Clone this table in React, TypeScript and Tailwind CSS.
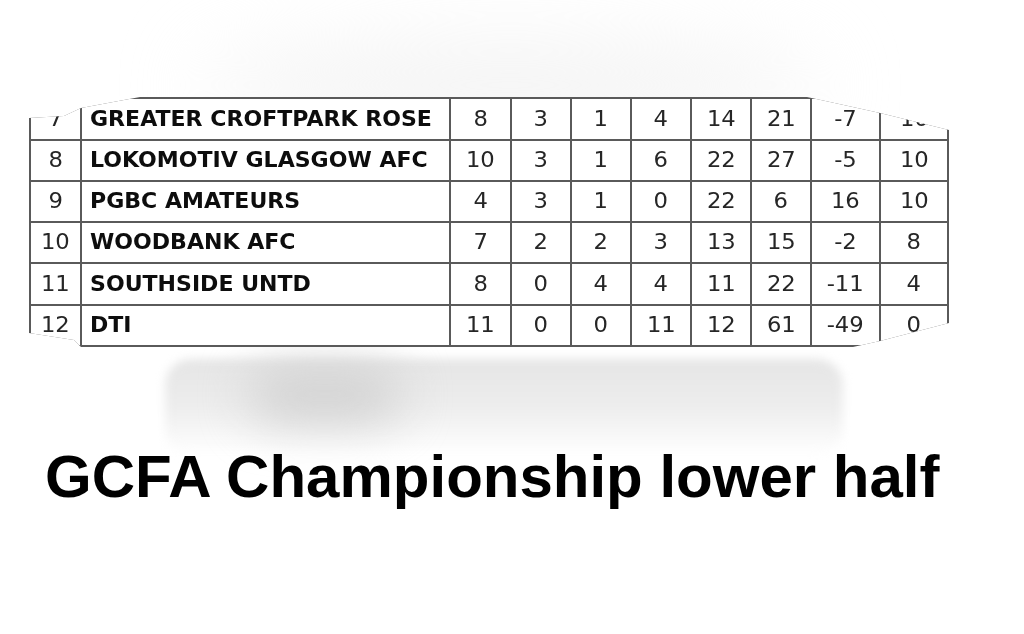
const rows: (string | number)[][] = [
  [7, 'GREATER CROFTPARK ROSE', 8, 3, 1, 4, 14, 21, -7, 10],
  [8, 'LOKOMOTIV GLASGOW AFC', 10, 3, 1, 6, 22, 27, -5, 10],
  [9, 'PGBC AMATEURS', 4, 3, 1, 0, 22, 6, 16, 10],
  [10, 'WOODBANK AFC', 7, 2, 2, 3, 13, 15, -2, 8],
  [11, 'SOUTHSIDE UNTD', 8, 0, 4, 4, 11, 22, -11, 4],
  [12, 'DTI', 11, 0, 0, 11, 12, 61, -49, 0],
];

function Cell({ value, name }: { value: string | number; name?: boolean }) {
  if (name) {
    return (
      <div className="bg-white flex items-center pl-[8px]">
        <span className="inline-block origin-left scale-x-[1.05] font-bold text-[#0d0d0d] whitespace-nowrap">
          {value}
        </span>
      </div>
    );
  }
  return (
    <div className="bg-white flex items-center justify-center">
      <span className="inline-block scale-x-[1.08] text-[#262626]">{value}</span>
    </div>
  );
}

export default function App() {
  return (
    <div className="relative w-[1024px] h-[634px] overflow-hidden bg-white">
      {/* faint glow above the lifted table */}
      <div className="absolute left-[200px] top-[45px] w-[620px] h-[80px] rounded-[50%] bg-[#f3f3f3] blur-2xl" />
      {/* shadow under the table */}
      <div className="absolute left-[165px] top-[359px] w-[678px] h-[96px] rounded-[26px] bg-gradient-to-b from-[#e5e5e5] via-[#ededed] to-[#ffffff] blur-[5px]" />
      <div className="absolute left-[250px] top-[366px] w-[150px] h-[56px] rounded-full bg-[#d2d2d2] blur-xl" />

      <div className="relative pt-[97px] pl-[29px]">
        <div className="grid w-fit grid-cols-[49px_367px_59px_58px_58px_58px_58px_58px_67px_66px] grid-rows-[40px_39px_39px_39px_40px_39px] gap-[2px] p-[2px] bg-[#5a5a5a] text-[21px] leading-none [font-family:'DejaVu_Sans',sans-serif] [clip-path:polygon(0_21px,35px_19px,52px_11px,111px_0,778px_0,801px_5px,851px_16px,920px_33px,920px_226px,851px_244px,824px_250px,52px_250px,45px_243px,0_236px)]">
          {rows.map((r) =>
            r.map((v, i) => <Cell key={`${r[0]}-${i}`} value={v} name={i === 1} />)
          )}
        </div>

        <h1 className="mt-[100px] pl-[16px] text-[60px] leading-none font-bold text-black [font-family:'Liberation_Sans',Arial,sans-serif]">
          GCFA Championship lower half
        </h1>
      </div>
    </div>
  );
}
